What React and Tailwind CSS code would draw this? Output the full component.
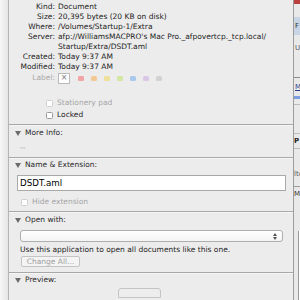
import React from "react";

const Tri = () => (
  <svg width="6" height="5" viewBox="0 0 6 5" className="shrink-0">
    <path d="M0 0 L6 0 L3 5 Z" fill="#6b6b6b" />
  </svg>
);

const Check = ({ dim }) => (
  <div
    className={`w-[7px] h-[7px] rounded-[1.5px] border bg-white shrink-0 ${
      dim ? "border-[#cfcfcf]" : "border-[#9a9a9a]"
    }`}
  />
);

const Sep = () => (
  <div className="h-[2px] flex flex-col shrink-0">
    <div className="h-px bg-[#a8a8a8]" />
    <div className="h-px bg-[#f6f6f6]" />
  </div>
);

const Header = ({ children }) => (
  <div className="h-[10px] flex items-center gap-[4px] pl-[6px] text-[#2a2a2a]">
    <Tri />
    <span>{children}</span>
  </div>
);

const rows = [
  ["Kind:", "Document"],
  ["Size:", "20,395 bytes (20 KB on disk)"],
  ["Where:", "/Volumes/Startup-1/Extra"],
  ["Server:", "afp://WilliamsMACPRO's Mac Pro._afpovertcp._tcp.local/"],
  ["", "Startup/Extra/DSDT.aml"],
  ["Created:", "Today 9:37 AM"],
  ["Modified:", "Today 9:37 AM"],
];

const colors = ["#f2a3a3", "#f4c894", "#efe099", "#d3e6a2", "#a9c8ee", "#dac6e6", "#d2d2d2"];

export default function App() {
  return (
    <div
      className="w-[300px] h-[300px] overflow-hidden flex bg-[#f3f3f3] text-[7.5px] leading-[10px] text-[#1c1c1c]"
      style={{ fontFamily: '"DejaVu Sans", Verdana, sans-serif' }}
    >
      <div className="w-[8px] shrink-0 bg-gradient-to-r from-[#f7f7f7] to-[#e6e6e6]" />
      <div className="w-[285px] shrink-0 bg-[#ececec] border-l border-[#b5b5b5] flex flex-col">
        <div className="pt-[2px] flex flex-col">
          {rows.map(([k, v], i) => (
            <div key={i} className="h-[10px] flex items-center">
              <div className="w-[46px] text-right shrink-0">{k}</div>
              <div className="pl-[3px] whitespace-nowrap">{v}</div>
            </div>
          ))}
          <div className="h-[12px] flex items-center">
            <div className="w-[46px] text-right shrink-0 text-[#a9a9a9]">Label:</div>
            <div className="pl-[3px] flex items-center">
              <div className="w-[12px] h-[11px] bg-white border border-[#b9b9b9] flex items-center justify-center text-[#777] text-[8px]">
                ×
              </div>
              <div className="flex items-center gap-[7px] ml-[8px]">
                {colors.map((c) => (
                  <div key={c} className="w-[6px] h-[5px] rounded-[1.5px]" style={{ background: c }} />
                ))}
              </div>
            </div>
          </div>
        </div>
        <div className="mt-[14px] h-[10px] flex items-center gap-[4px] pl-[37px] text-[#a5a5a5]">
          <Check dim />
          <span>Stationery pad</span>
        </div>
        <div className="mt-[2px] h-[10px] flex items-center gap-[4px] pl-[37px]">
          <Check />
          <span>Locked</span>
        </div>
        <div className="mt-[4px]">
          <Sep />
        </div>
        <div className="mt-[2px]">
          <Header>More Info:</Header>
        </div>
        <div className="mt-[5px] h-[10px] pl-[11px] text-[#9a9a9a] flex items-center">--</div>
        <div className="mt-[4px]">
          <Sep />
        </div>
        <div className="mt-[1px]">
          <Header>Name &amp; Extension:</Header>
        </div>
        <div className="mt-[5px] mx-[8px] w-[269px] h-[16px] bg-white border border-[#a9a9a9] flex items-center pl-[2px] text-[8.7px] text-black">
          DSDT.aml
        </div>
        <div className="mt-[6px] h-[10px] flex items-center gap-[4px] pl-[12px] text-[#a5a5a5]">
          <Check dim />
          <span>Hide extension</span>
        </div>
        <div className="mt-[4px]">
          <Sep />
        </div>
        <div className="mt-[2px]">
          <Header>Open with:</Header>
        </div>
        <div className="mt-[5px] ml-[11px] w-[263px] h-[12px] rounded-[3px] border border-[#aeaeae] bg-gradient-to-b from-white to-[#f4f4f4] flex items-center justify-end pr-[5px]">
          <svg width="4" height="7" viewBox="0 0 4 7">
            <path d="M0 3 L2 0 L4 3 Z M0 4 L4 4 L2 7 Z" fill="#555" />
          </svg>
        </div>
        <div className="mt-[3px] h-[10px] pl-[11px] flex items-center whitespace-nowrap">
          Use this application to open all documents like this one.
        </div>
        <div className="mt-[1px] ml-[12px] w-[59px] h-[11px] rounded-[2px] border border-[#c3c3c3] bg-[#f4f4f4] text-[#9d9d9d] flex items-center justify-center">
          Change All...
        </div>
        <div className="mt-[5px]">
          <Sep />
        </div>
        <div className="mt-[1px]">
          <Header>Preview:</Header>
        </div>
        <div className="mt-[3px] ml-[109px] w-[43px] h-[10px] rounded-t-[3px] border border-[#c4c4c4] bg-[#ededed]" />
      </div>
      <div className="w-px shrink-0 bg-[#9c9c9c]" />
      <div className="flex-1 bg-[#e9e9e9] flex flex-col text-[7px] overflow-hidden">
        <div className="h-[4px] bg-[#b9403c]" />
        <div className="h-[13px]" />
        <div className="h-[18px] bg-[#c9d5e4] flex items-center pl-[1px] text-[#333]">F</div>
        <div className="h-[25px] flex items-center pl-[1px] text-[#555]">U</div>
        <div className="h-[18px] border-b border-[#8c8c8c]" />
        <div className="h-[18px] flex items-center pl-[1px] text-[#2a3f8f] underline">M</div>
        <div className="h-[3px] bg-[#7f9ee0]" />
        <div className="h-[6px] border-b border-[#bdbdbd]" />
        <div className="h-[29px] border-b border-[#bdbdbd]" />
        <div className="h-[15px] flex items-center font-bold text-[#222] border-b border-[#bdbdbd]">P</div>
        <div className="h-[20px]" />
        <div className="h-[10px] flex items-center text-[#555]">lte</div>
        <div className="h-[8px] border-b border-[#9c9c9c]" />
        <div className="h-[14px] flex items-center text-[#333]">Mo</div>
        <div className="h-[30px]" />
        <div className="flex-1 ml-[4px] border-l border-[#9a9a9a] bg-white" />
      </div>
    </div>
  );
}
